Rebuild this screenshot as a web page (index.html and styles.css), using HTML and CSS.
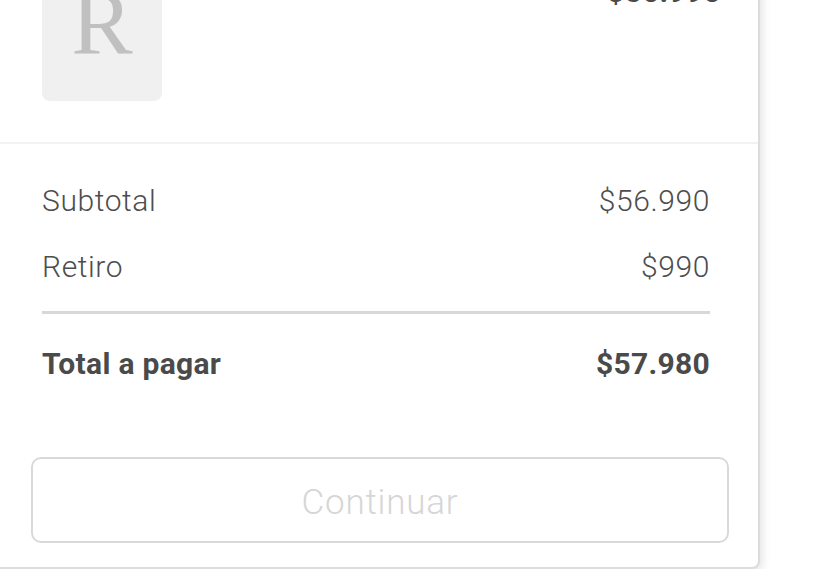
FILE: index.html
```html
<!DOCTYPE html>
<html lang="es">
<head>
    <meta charset="UTF-8">
    <meta name="viewport" content="width=device-width, initial-scale=1.0">
    <title>Resumen de compra</title>
    <link rel="stylesheet" href="styles.css">
</head>
<body>
    <div class="cart-card">
        <!-- Producto -->
        <div class="cart-item">
            <div class="item-thumb">R</div>
            <div class="item-price">$56.990</div>
        </div>

        <!-- Resumen -->
        <div class="cart-summary">
            <div class="summary-row">
                <span>Subtotal</span>
                <span>$56.990</span>
            </div>
            <div class="summary-row">
                <span>Retiro</span>
                <span>$990</span>
            </div>
            <div class="summary-line"></div>
            <div class="summary-row total">
                <span>Total a pagar</span>
                <span>$57.980</span>
            </div>
        </div>

        <div class="cart-actions">
            <button class="btn-continue" disabled>Continuar</button>
        </div>
    </div>
</body>
</html>
```

FILE: styles.css
```css
* {
    margin: 0;
    padding: 0;
    box-sizing: border-box;
}

body {
    background-color: #fff;
    color: #4a4a4a;
    font-family: Roboto, 'Liberation Sans', sans-serif;
    overflow: hidden;
}

.cart-card {
    width: 762px;
    margin-top: -40px;
    margin-left: -2px;
    background-color: #fff;
    border-right: 2px solid #dcdcdc;
    border-bottom: 2px solid #dcdcdc;
    border-radius: 0 0 8px 0;
    box-shadow: 3px 3px 8px rgba(0,0,0,0.10);
}

.cart-item {
    display: flex;
    justify-content: space-between;
    align-items: flex-start;
    padding: 21px 37px 41px 44px;
    border-bottom: 2px solid #f2f2f2;
}

.item-thumb {
    width: 120px;
    height: 120px;
    background-color: #f0f0f0;
    border-radius: 8px;
    color: #c0c0c0;
    font-family: 'Liberation Serif', serif;
    font-size: 92px;
    line-height: 0.92;
    text-align: center;
    overflow: hidden;
}

.item-price {
    font-size: 30px;
    font-weight: 700;
    line-height: 1;
    margin-top: -4px;
    letter-spacing: 0.3px;
}

.cart-summary {
    padding: 23px 48px 0 44px;
}

.summary-row {
    display: flex;
    justify-content: space-between;
    align-items: center;
    height: 66px;
    font-size: 30px;
    font-weight: 300;
    color: #4d4d4d;
    letter-spacing: 0.6px;
}

.summary-row.total {
    font-weight: 700;
    color: #4a4a4a;
    letter-spacing: 0.3px;
}

.summary-line {
    height: 3px;
    background-color: #d8d8d8;
    margin: 12px 0 16px;
}

.cart-actions {
    padding: 61px 29px 24px 33px;
}

.btn-continue {
    width: 100%;
    height: 86px;
    padding-top: 4px;
    background-color: #fff;
    border: 2px solid #d9d9d9;
    border-radius: 10px;
    color: #d6d6d6;
    font-family: Roboto, 'Liberation Sans', sans-serif;
    font-size: 35px;
    font-weight: 300;
    letter-spacing: 0.8px;
}
```
